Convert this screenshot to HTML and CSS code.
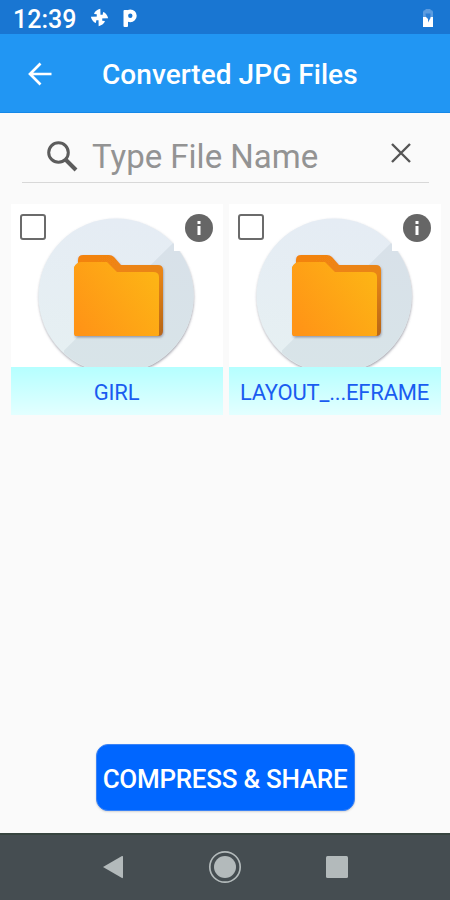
FILE: index.html
```html
<!DOCTYPE html>
<html lang="en">
<head>
    <meta charset="UTF-8">
    <meta name="viewport" content="width=device-width, initial-scale=1.0">
    <title>Converted JPG Files</title>
    <link rel="stylesheet" href="styles.css">
</head>
<body>

<!-- Shared shapes for the folder cards -->
<svg class="defs" width="0" height="0" aria-hidden="true">
    <defs>
        <linearGradient id="folderFront" x1="0" y1="0.8" x2="1" y2="0.2">
            <stop offset="0" stop-color="#ff9416"/>
            <stop offset="1" stop-color="#fdb515"/>
        </linearGradient>
        <linearGradient id="folderBack" x1="0" y1="0" x2="1" y2="1">
            <stop offset="0" stop-color="#f58310"/>
            <stop offset="0.6" stop-color="#e88514"/>
            <stop offset="1" stop-color="#b5651a"/>
        </linearGradient>
        <linearGradient id="disc" x1="0.5" y1="0" x2="0.4" y2="1">
            <stop offset="0" stop-color="#e5ecf4"/>
            <stop offset="1" stop-color="#e6f0f2"/>
        </linearGradient>
        <linearGradient id="discShade" x1="0.5" y1="0" x2="0.4" y2="1">
            <stop offset="0" stop-color="#d8e1e9"/>
            <stop offset="1" stop-color="#d8e4e8"/>
        </linearGradient>
        <filter id="softShadow" x="-10%" y="-10%" width="120%" height="120%">
            <feDropShadow dx="0.4" dy="1.4" stdDeviation="1" flood-color="#667" flood-opacity="0.6"/>
        </filter>
        <symbol id="folder" viewBox="0 0 212 163">
            <circle cx="105" cy="92" r="77.5" fill="url(#disc)" filter="url(#softShadow)"/>
            <path d="M53 146.5L162 39A77.5 77.5 0 0 1 53 149z" fill="url(#discShade)"/>
            <path d="M163 30V47H174L190 40V30z" fill="#fff"/>
            <path d="M67 60V56Q67 51 72 51H98Q101 51 103 53L110 61H147Q152 61 152 66V127Q152 132 147 132H64V62z" fill="url(#folderBack)" filter="url(#softShadow)"/>
            <path d="M63 63Q66 58 70 58H96L106 68H142Q148 68 148 73V131Q148 132 146 132H65Q63 132 63 130z" fill="url(#folderFront)"/>
        </symbol>
        <symbol id="info" viewBox="0 0 28 28">
            <circle cx="14" cy="14" r="14" fill="#666"/>
            <path d="M12.5 7h3v3h-3zM12.5 12h3v9h-3z" fill="#fff"/>
        </symbol>
    </defs>
</svg>

<div class="screen">
    <header class="status-bar">
        <span class="clock">12:39</span>
        <svg class="pinwheel" width="19" height="19" viewBox="0 0 18 18">
            <g fill="#fff">
                <path id="blade" d="M10 10H6.4V6L3.8 5.6Q5 2 9.8 0.8z"/>
                <use href="#blade" transform="rotate(90 9 9)"/>
                <use href="#blade" transform="rotate(180 9 9)"/>
                <use href="#blade" transform="rotate(270 9 9)"/>
            </g>
        </svg>
        <!-- parking-style badge -->
        <svg class="p-mark" width="16" height="20" viewBox="0 0 16 20">
            <rect x="1.5" y="2" width="4.5" height="17" rx="1" fill="#fff"/>
            <circle cx="8.3" cy="7.8" r="4.3" fill="none" stroke="#fff" stroke-width="4.2"/>
        </svg>
        <svg class="battery" width="12" height="20" viewBox="0 0 12 20">
            <path d="M3.5 2V1h5v1Q11 2 11 4V10H1V4Q1 2 3.5 2z" fill="#5c9ce0"/>
            <path d="M1 9h10v10H1z" fill="#fff"/>
            <path d="M3.500 5.500H8.500V10L6 14.500V11L4 9z" fill="#2c7fd6"/>
        </svg>
    </header>

    <div class="toolbar">
        <svg class="back" width="24" height="24" viewBox="0 0 24 24">
            <path d="M23.5 12H2M12.5 1.5L2 12L12.5 22.5" fill="none" stroke="#fff" stroke-width="2.7"/>
        </svg>
        <h1>Converted JPG Files</h1>
    </div>

    <main class="content">
        <div class="search">
            <svg class="search-icon" width="31" height="31" viewBox="0 0 31 31">
                <circle cx="11.5" cy="11.5" r="9.8" fill="none" stroke="#5c5c5c" stroke-width="3"/>
                <path d="M18.5 18.5L29 29" stroke="#5c5c5c" stroke-width="4"/>
            </svg>
            <span class="hint">Type File Name</span>
            <svg class="clear" width="20" height="20" viewBox="0 0 20 20">
                <path d="M1 1L19 19M19 1L1 19" stroke="#555" stroke-width="2.4"/>
            </svg>
        </div>

        <div class="grid">
            <div class="card">
                <svg class="thumb" width="212" height="163"><use href="#folder"/></svg>
                <span class="checkbox"></span>
                <svg class="info" width="28" height="28"><use href="#info"/></svg>
                <div class="name">GIRL</div>
            </div>
            <div class="card">
                <svg class="thumb" width="212" height="163"><use href="#folder"/></svg>
                <span class="checkbox"></span>
                <svg class="info" width="28" height="28"><use href="#info"/></svg>
                <div class="name">LAYOUT_...EFRAME</div>
            </div>
        </div>

        <button class="share-btn">COMPRESS &amp; SHARE</button>
    </main>

    <nav class="nav-bar">
        <svg width="22" height="26" viewBox="0 0 22 26">
            <path d="M1 13L20 2Q21 1.5 21 3V23Q21 24.5 20 24z" fill="#b3babb"/>
        </svg>
        <svg width="34" height="34" viewBox="0 0 34 34">
            <circle cx="17" cy="17" r="15.2" fill="none" stroke="#b3babb" stroke-width="1.7"/>
            <circle cx="17" cy="17" r="11" fill="#b3babb"/>
        </svg>
        <svg width="22" height="22" viewBox="0 0 22 22">
            <rect width="22" height="22" rx="1.5" fill="#b3babb"/>
        </svg>
    </nav>
</div>

</body>
</html>
```
FILE: styles.css
```css
:root {
    --primary: #2196f3;
    --primary-dark: #1976d2;
    --bg: #fafafa;
}

* {
    box-sizing: border-box;
}

body {
    margin: 0;
    font-family: Roboto, "Liberation Sans", sans-serif;
    background-color: var(--bg);
}

svg {
    display: block;
    flex-shrink: 0;
}

.defs {
    position: absolute;
}

.screen {
    display: flex;
    flex-direction: column;
    height: 900px;
    overflow: hidden;
}

/* --- Status bar --- */
.status-bar {
    display: flex;
    align-items: center;
    height: 34px;
    padding: 3px 16px 0 13px;
    background-color: var(--primary-dark);
    color: #fff;
}

.clock {
    width: 77px;
    padding-top: 1px;
    font-size: 25px;
    font-weight: 500;
    white-space: nowrap;
}

.pinwheel {
    margin-bottom: 2px;
}

.p-mark {
    margin: 0 0 2px 13px;
}

.battery {
    margin: 0 0 2px auto;
}

/* --- Toolbar --- */
.toolbar {
    display: flex;
    align-items: center;
    height: 79px;
    padding: 0 28px;
    background-color: var(--primary);
    border-bottom: 1px solid #1488e8;
    color: #fff;
}

.back {
    margin-top: 1px;
}

.toolbar h1 {
    margin: 3px 0 0 50px;
    font-size: 28px;
    font-weight: 500;
    letter-spacing: 0.05px;
    white-space: nowrap;
}

/* --- Search and file grid --- */
.content {
    display: flex;
    flex-direction: column;
    flex: 1;
}

.search {
    display: flex;
    align-items: center;
    height: 70px;
    margin: 0 21px 0 22px;
    padding: 17px 18px 0 25px;
    border-bottom: 1px solid #d8d8d8;
}

.hint {
    margin: 1px 0 0 14px;
    color: #939393;
    font-size: 33px;
    white-space: nowrap;
}

.clear {
    margin: 0 0 6px auto;
}

.grid {
    display: grid;
    grid-template-columns: 212px 212px;
    gap: 6px;
    margin: 21px 9px 0 11px;
}

.card {
    position: relative;
    height: 211px;
    background-color: #fff;
}

.checkbox {
    position: absolute;
    top: 10px;
    left: 9px;
    width: 26px;
    height: 26px;
    border: 2px solid #6b6b6b;
    border-radius: 3px;
}

.info {
    position: absolute;
    top: 10px;
    right: 10px;
}

.name {
    height: 48px;
    padding-right: 1px;
    background: linear-gradient(#b5ffff, #e3ffff);
    color: #1a5cf0;
    font-size: 22px;
    line-height: 51px;
    letter-spacing: -0.2px;
    text-align: center;
    white-space: nowrap;
}

.share-btn {
    align-self: center;
    width: 259px;
    height: 67px;
    margin: auto 0 22px;
    padding: 2px 0 0;
    background-color: #0066ff;
    border: 1px solid #3c83f5;
    border-radius: 12px;
    box-shadow: 0 1px 2px rgba(0, 0, 0, 0.15);
    color: #fff;
    font-family: inherit;
    font-size: 26px;
    font-weight: 500;
    letter-spacing: -0.27px;
    white-space: nowrap;
}

/* --- System navigation --- */
.nav-bar {
    display: flex;
    align-items: center;
    justify-content: space-between;
    height: 67px;
    padding: 0 102px 2px 102px;
    background-color: #454d51;
    border-top: 2px solid #37443f;
}
```
